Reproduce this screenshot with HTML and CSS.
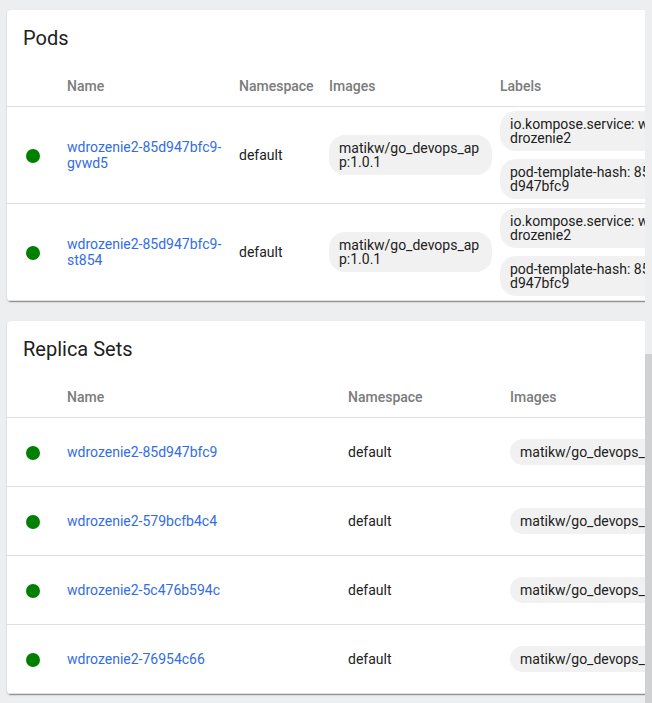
FILE: index.html
```html
<!DOCTYPE html>
<html lang="en">
<head>
<meta charset="utf-8">
<title>Workloads</title>
<link rel="stylesheet" href="styles.css">
</head>
<body>
<main class="content">
  <section class="card">
    <h2 class="card-title">Pods</h2>
    <table class="pods">
      <colgroup><col class="status-col"><col class="name-col"><col class="namespace-col"><col class="images-col"><col></colgroup>
      <thead>
        <tr><th></th><th>Name</th><th>Namespace</th><th>Images</th><th>Labels</th></tr>
      </thead>
      <tbody>
        <tr>
          <td><span class="dot"></span></td>
          <td><a href="#">wdrozenie2-85d947bfc9-gvwd5</a></td>
          <td>default</td>
          <td><span class="chip">matikw/go_devops_app:1.0.1</span></td>
          <td><div class="chips"><span class="chip">io.kompose.service: wdrozenie2</span><span class="chip">pod-template-hash: 85d947bfc9</span></div></td>
        </tr>
        <tr>
          <td><span class="dot"></span></td>
          <td><a href="#">wdrozenie2-85d947bfc9-st854</a></td>
          <td>default</td>
          <td><span class="chip">matikw/go_devops_app:1.0.1</span></td>
          <td><div class="chips"><span class="chip">io.kompose.service: wdrozenie2</span><span class="chip">pod-template-hash: 85d947bfc9</span></div></td>
        </tr>
      </tbody>
    </table>
  </section>

  <section class="card">
    <h2 class="card-title">Replica Sets</h2>
    <table class="replica-sets">
      <colgroup><col class="status-col"><col class="name-col"><col class="namespace-col"><col></colgroup>
      <thead>
        <tr><th></th><th>Name</th><th>Namespace</th><th>Images</th></tr>
      </thead>
      <tbody>
        <tr>
          <td><span class="dot"></span></td>
          <td><a href="#">wdrozenie2-85d947bfc9</a></td>
          <td>default</td>
          <td><span class="chip">matikw/go_devops_app:1.0.1</span></td>
        </tr>
        <tr>
          <td><span class="dot"></span></td>
          <td><a href="#">wdrozenie2-579bcfb4c4</a></td>
          <td>default</td>
          <td><span class="chip">matikw/go_devops_app:1.0.1</span></td>
        </tr>
        <tr>
          <td><span class="dot"></span></td>
          <td><a href="#">wdrozenie2-5c476b594c</a></td>
          <td>default</td>
          <td><span class="chip">matikw/go_devops_app:1.0.1</span></td>
        </tr>
        <tr>
          <td><span class="dot"></span></td>
          <td><a href="#">wdrozenie2-76954c66</a></td>
          <td>default</td>
          <td><span class="chip">matikw/go_devops_app:1.0.1</span></td>
        </tr>
      </tbody>
    </table>
  </section>
</main>
<div class="scroll-track"><div class="scroll-thumb"></div></div>
</body>
</html>
```

FILE: styles.css
```css
* {
  box-sizing: border-box;
}

body {
  display: flex;
  height: 100vh;
  margin: 0;
  overflow: hidden;
  background: #edeef0;
  color: #212121;
  font: 14px/16px Roboto, sans-serif;
}

.content {
  flex: 1;
  min-width: 0;
  display: flex;
  flex-direction: column;
  gap: 20px;
  padding: 10px 7px;
  overflow: hidden;
}

.card {
  flex: none;
  min-width: 720px;
  border-radius: 4px;
  background: #fff;
  box-shadow: 0 2px 1px -1px rgba(0, 0, 0, 0.3), 0 1px 2px rgba(0, 0, 0, 0.2);
}

.card-title {
  margin: 0;
  padding: 16px;
  font-size: 20px;
  font-weight: 400;
  line-height: 24px;
}

table {
  width: 100%;
  table-layout: fixed;
  border-collapse: separate;
  border-spacing: 0;
}

.status-col {
  width: 60px;
}

.pods .name-col {
  width: 172px;
}

.pods .namespace-col {
  width: 90px;
}

.pods .images-col {
  width: 171px;
}

.replica-sets .name-col {
  width: 281px;
}

.replica-sets .namespace-col {
  width: 162px;
}

th,
td {
  padding: 0;
  border-bottom: 1px solid #e0e0e0;
  text-align: left;
  vertical-align: middle;
}

th {
  height: 41px;
  color: #7b7b7b;
  font-weight: 500;
}

td {
  height: 69px;
}

.pods td {
  height: 97px;
}

.pods td:nth-child(2) {
  padding-right: 8px;
}

a {
  color: #326de6;
  text-decoration: none;
}

.dot {
  display: block;
  width: 14px;
  height: 14px;
  margin: 2px 0 0 19px;
  border-radius: 50%;
  background: #008000;
}

.chips {
  display: flex;
  flex-direction: column;
  align-items: flex-start;
  gap: 8px;
}

.chip {
  display: inline-block;
  max-width: 100%;
  padding: 6px 10px;
  border-radius: 16px;
  background: #f1f1f1;
  line-height: 14px;
  vertical-align: middle;
  word-break: break-all;
}

.pods .chip {
  max-width: 163px;
}

.scroll-track {
  display: flex;
  flex-direction: column;
  justify-content: flex-end;
  width: 7px;
  background: #edeef0;
}

.scroll-thumb {
  height: 349px;
  background: #d0d1d3;
}
```
